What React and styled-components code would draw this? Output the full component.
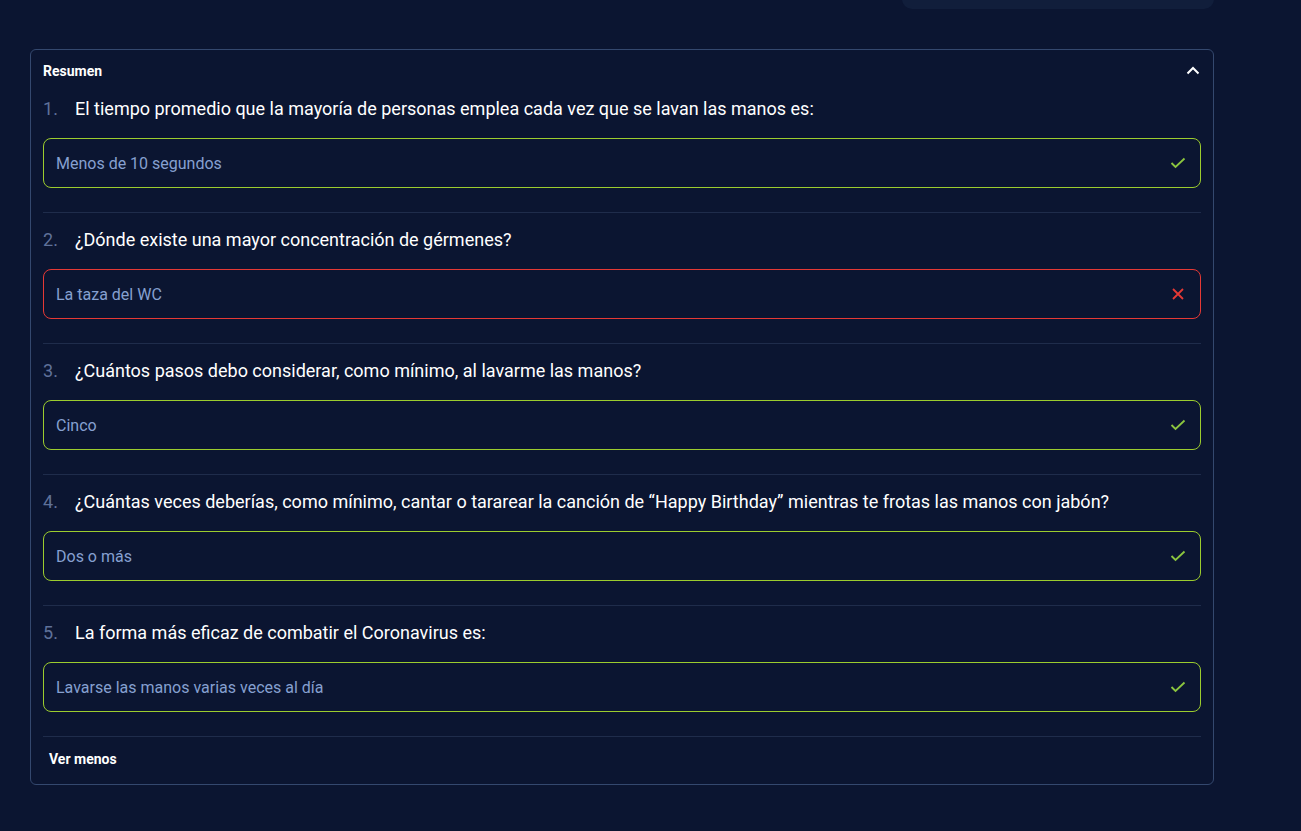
import React, { useState } from "react";
import styled, { createGlobalStyle } from "styled-components";

const GlobalStyle = createGlobalStyle`
  body {
    margin: 0;
    background: #0b1531;
    font-family: Roboto, "Liberation Sans", sans-serif;
  }
`;

const Page = styled.div`
  padding: 0 0 40px 30px;
  width: 1184px;
`;

const TopBar = styled.div`
  display: flex;
  justify-content: flex-end;
  margin-top: -31px;
`;

const SearchBox = styled.div`
  width: 312px;
  height: 40px;
  background: #111e3b;
  border-radius: 10px;
`;

const Card = styled.section`
  margin-top: 40px;
  border: 1px solid #34486e;
  border-radius: 6px;
  padding: 9px 12px 0;
`;

const Header = styled.div`
  display: flex;
  align-items: center;
  justify-content: space-between;
  height: 23px;
  cursor: pointer;
`;

const Title = styled.span`
  color: #ffffff;
  font-size: 14px;
  font-weight: 700;
`;

const Item = styled.div`
  padding-top: 14px;
`;

const Question = styled.div`
  display: flex;
  align-items: center;
  height: 24px;
  font-size: 18px;
  color: #ffffff;
`;

const Number = styled.span`
  width: 32px;
  color: #5f719a;
`;

const Answer = styled.div`
  margin-top: 18px;
  height: 50px;
  box-sizing: border-box;
  border: 1px solid ${(p) => (p.correct ? "#9ccc2e" : "#e53935")};
  border-radius: 8px;
  display: flex;
  align-items: center;
  justify-content: space-between;
  padding: 0 14px 0 12px;
  font-size: 16px;
  color: #86a0d0;
`;

const Divider = styled.div`
  margin-top: 24px;
  height: 1px;
  background: #1f2c4b;
`;

const Footer = styled.button`
  display: block;
  background: none;
  border: none;
  padding: 13px 6px 16px;
  color: #ffffff;
  font-family: inherit;
  font-size: 14px;
  font-weight: 700;
  line-height: 18px;
  cursor: pointer;
`;

const ChevronUp = () => (
  <svg width="14" height="9" viewBox="0 0 14 9" style={{ marginRight: 1 }}>
    <polyline
      points="1.5,7.5 7,2 12.5,7.5"
      fill="none"
      stroke="#ffffff"
      strokeWidth="2"
    />
  </svg>
);

const CheckIcon = () => (
  <svg width="16" height="12" viewBox="0 0 16 12">
    <polyline
      points="1.5,6 5.5,10 14.5,1.5"
      fill="none"
      stroke="#8cc63f"
      strokeWidth="1.8"
    />
  </svg>
);

const CrossIcon = () => (
  <svg width="12" height="12" viewBox="0 0 12 12" style={{ marginRight: 2 }}>
    <path d="M1 1 11 11M11 1 1 11" stroke="#e53935" strokeWidth="1.8" />
  </svg>
);

const QUESTIONS = [
  {
    q: "El tiempo promedio que la mayoría de personas emplea cada vez que se lavan las manos es:",
    a: "Menos de 10 segundos",
    correct: true,
  },
  {
    q: "¿Dónde existe una mayor concentración de gérmenes?",
    a: "La taza del WC",
    correct: false,
  },
  {
    q: "¿Cuántos pasos debo considerar, como mínimo, al lavarme las manos?",
    a: "Cinco",
    correct: true,
  },
  {
    q: "¿Cuántas veces deberías, como mínimo, cantar o tararear la canción de “Happy Birthday” mientras te frotas las manos con jabón?",
    a: "Dos o más",
    correct: true,
  },
  {
    q: "La forma más eficaz de combatir el Coronavirus es:",
    a: "Lavarse las manos varias veces al día",
    correct: true,
  },
];

export default function App() {
  const [open, setOpen] = useState(true);

  return (
    <Page>
      <GlobalStyle />
      <TopBar>
        <SearchBox />
      </TopBar>
      <Card>
        <Header onClick={() => setOpen(!open)}>
          <Title>Resumen</Title>
          <ChevronUp />
        </Header>
        {open &&
          QUESTIONS.map((item, i) => (
            <Item key={i}>
              <Question>
                <Number>{i + 1}.</Number>
                {item.q}
              </Question>
              <Answer correct={item.correct}>
                {item.a}
                {item.correct ? <CheckIcon /> : <CrossIcon />}
              </Answer>
              <Divider />
            </Item>
          ))}
        <Footer onClick={() => setOpen(!open)}>
          {open ? "Ver menos" : "Ver más"}
        </Footer>
      </Card>
    </Page>
  );
}
